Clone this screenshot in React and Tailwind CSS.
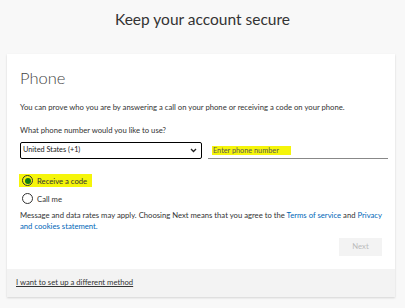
export default function App() {
  return (
    <div className="w-[405px] h-[308px] bg-[#f8f8f8] overflow-hidden" style={{ fontFamily: 'Lato, "Open Sans", sans-serif' }}>
      <div className="h-[54px] flex items-start justify-center pt-[8px]">
        <h1 className="text-[15.5px] leading-[22px] text-[#333]">Keep your account secure</h1>
      </div>
      <div className="mx-[7px] w-[388px] bg-white shadow-[0_1px_2px_rgba(0,0,0,0.15)]">
        <div className="pl-[13px] pr-[7px] pt-[14px] pb-[13px]">
          <div className="text-[16.5px] leading-[20px] font-light text-[#444]">Phone</div>
          <p className="mt-[14px] text-[7.7px] leading-[10px] text-[#333]">You can prove who you are by answering a call on your phone or receiving a code on your phone.</p>
          <p className="mt-[13px] text-[7.7px] leading-[10px] text-[#333]">What phone number would you like to use?</p>
          <div className="mt-[7px] flex items-end gap-[6px]">
            <div className="w-[182px] h-[17px] border border-black rounded-[2px] flex items-center justify-between px-[2px]">
              <span className="text-[7.3px] text-[#222]">United States (+1)</span>
              <svg width="7" height="5" viewBox="0 0 7 5" className="mr-[2px]"><path d="M1 1l2.5 2.5L6 1" stroke="#222" strokeWidth="1.3" fill="none" /></svg>
            </div>
            <div className="w-[180px] h-[17px] border-b border-[#888] flex items-center pl-[4px]">
              <span className="text-[7.3px] leading-[9px] text-[#555] bg-[#f5f50a] px-[1px] pr-[12px]">Enter phone number</span>
            </div>
          </div>
          <div className="mt-[15px] flex flex-col gap-[6px]">
            <div className="flex">
              <div className="flex items-center gap-[4px] bg-[#f5f50a] pl-[3px] pr-[5px] py-[1px] -ml-[1px]">
                <span className="w-[11px] h-[11px] rounded-full border border-[#333] flex items-center justify-center">
                  <span className="w-[6px] h-[6px] rounded-full bg-[#107c10]" />
                </span>
                <span className="text-[7.7px] leading-[10px] text-[#333]">Receive a code</span>
              </div>
            </div>
            <div className="flex items-center gap-[4px] pl-[2px]">
              <span className="w-[11px] h-[11px] rounded-full border border-[#333]" />
              <span className="text-[7.7px] leading-[10px] text-[#333]">Call me</span>
            </div>
          </div>
          <div className="mt-[6px] text-[7.7px] leading-[11px] text-[#333]">
            <div>Message and data rates may apply. Choosing Next means that you agree to the <span className="text-[#0067b8]">Terms of service</span> and <span className="text-[#0067b8]">Privacy</span></div>
            <div className="text-[#0067b8]">and cookies statement.</div>
          </div>
          <div className="mt-[6px] flex justify-end pr-[6px]">
            <div className="w-[43px] h-[18px] bg-[#f3f3f3] flex items-center justify-center text-[7.7px] text-[#bbb]">Next</div>
          </div>
        </div>
        <div className="bg-[#f3f3f3] h-[28px] px-[9px] flex items-center">
          <span className="text-[7.7px] text-[#333] underline">I want to set up a different method</span>
        </div>
      </div>
    </div>
  );
}
